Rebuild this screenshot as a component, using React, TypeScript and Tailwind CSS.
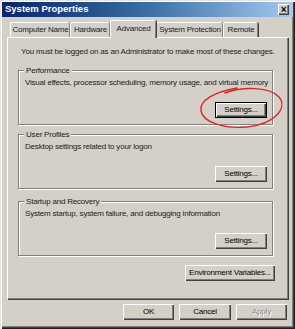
import clsx from "clsx";
import type { ReactNode } from "react";

const raised =
  "shadow-[inset_1px_1px_0_#ffffff,inset_-1px_-1px_0_#404040,inset_-2px_-2px_0_#808080]";

function Btn({
  children,
  className,
  disabled,
  isDefault,
}: {
  children: ReactNode;
  className?: string;
  disabled?: boolean;
  isDefault?: boolean;
}) {
  return (
    <button
      className={clsx(
        "flex h-[16px] items-center justify-center bg-[#d4d0c8] leading-none",
        isDefault
          ? "border border-black shadow-[inset_1px_1px_0_#ffffff,inset_-1px_-1px_0_#404040,inset_-2px_-2px_0_#808080]"
          : raised,
        disabled ? "text-[#8a8a8a] [text-shadow:1px_1px_0_#ffffff]" : "text-black",
        className
      )}
    >
      {children}
    </button>
  );
}

function Group({
  title,
  body,
  className,
  isDefault,
}: {
  title: string;
  body: string;
  className?: string;
  isDefault?: boolean;
}) {
  return (
    <div
      className={clsx(
        "relative ml-[10px] flex h-[55px] w-[255px] flex-col border border-[#808080] pl-[6px] pr-[5px] pt-[6px] shadow-[inset_1px_1px_0_#ffffff,1px_1px_0_#ffffff]",
        className
      )}
    >
      <span className="absolute -top-[6px] left-[5px] bg-[#d4d0c8] px-[2px] leading-[11px] text-[#202020]">
        {title}
      </span>
      <p className="leading-[11px] text-[#202020]">{body}</p>
      <div className="mt-auto mb-[6px] flex justify-end">
        <Btn isDefault={isDefault} className="w-[52px]">
          Settings...
        </Btn>
      </div>
    </div>
  );
}

const tabs = [
  { label: "Computer Name", w: "w-[60px]" },
  { label: "Hardware", w: "w-[40px]" },
  { label: "Advanced", w: "w-[46px]", active: true },
  { label: "System Protection", w: "w-[67px]" },
  { label: "Remote", w: "w-[35px]" },
];

export default function App() {
  return (
    <div className="relative flex h-[329px] w-[295px] flex-col whitespace-nowrap bg-[#d4d0c8] font-['Liberation_Sans',Arial,sans-serif] text-[8px] tracking-[-0.2px] shadow-[inset_1px_1px_0_#e6e4de,inset_2px_2px_0_#ffffff,inset_-1px_-1px_0_#202020,inset_-2px_-2px_0_#404040,inset_-3px_-3px_0_#808080]">
      {/* title bar */}
      <div className="mx-[2px] mt-[2px] flex h-[15px] items-center justify-between bg-gradient-to-r from-[#0a246a] via-[#3a6ea5] to-[#a6caf0] pl-[3px] pr-[4px]">
        <span className="text-[9.5px] font-bold tracking-[0px] text-white">System Properties</span>
        <span
          className={clsx(
            "flex h-[11px] w-[11px] items-center justify-center bg-[#d4d0c8] text-[10px] font-bold leading-none text-black",
            raised
          )}
        >
          ×
        </span>
      </div>

      {/* tabs */}
      <div className="ml-[10px] mt-[3px] flex h-[17px] items-end">
        {tabs.map((t) => (
          <div
            key={t.label}
            className={clsx(
              "flex items-center justify-center rounded-t-[2px] border-l border-t border-white bg-[#d4d0c8] text-[#202020] shadow-[inset_-1px_0_0_#808080,1px_0_0_#404040]",
              t.w,
              t.active ? "relative z-10 -mb-px h-[18px] pb-[2px]" : "h-[15px]"
            )}
          >
            {t.label}
          </div>
        ))}
      </div>

      {/* panel */}
      <div className="ml-[7px] flex h-[262px] w-[281px] flex-col border-l border-t border-white shadow-[inset_-1px_-1px_0_#808080,1px_1px_0_#404040]">
        <p className="ml-[13px] mt-[8px] leading-[11px] text-[#202020]">
          You must be logged on as an Administrator to make most of these changes.
        </p>
        <Group
          className="mt-[13px]"
          title="Performance"
          body="Visual effects, processor scheduling, memory usage, and virtual memory"
          isDefault
        />
        <Group
          className="mt-[9px]"
          title="User Profiles"
          body="Desktop settings related to your logon"
        />
        <Group
          className="mt-[12px]"
          title="Startup and Recovery"
          body="System startup, system failure, and debugging information"
        />
        <div className="mt-[9px] flex w-[267px] justify-end">
          <Btn className="w-[90px]">Environment Variables...</Btn>
        </div>
      </div>

      {/* footer */}
      <div className="mr-[8px] mt-[5px] flex justify-end gap-[5px]">
        <Btn className="w-[51px]">OK</Btn>
        <Btn className="w-[52px]">Cancel</Btn>
        <Btn className="w-[51px]" disabled>
          Apply
        </Btn>
      </div>

      {/* hand-drawn red mark around the Performance settings button */}
      <svg
        className="pointer-events-none absolute left-[195px] top-[82px]"
        width="95"
        height="50"
        viewBox="0 0 95 50"
        fill="none"
      >
        <path
          d="M30 11 C46 5 74 4 84 15 C93 26 80 42 52 45 C28 47 8 40 6 29 C4 18 20 10 42 6"
          stroke="#d42a2a"
          strokeWidth="1.4"
          strokeLinecap="round"
        />
      </svg>
    </div>
  );
}
